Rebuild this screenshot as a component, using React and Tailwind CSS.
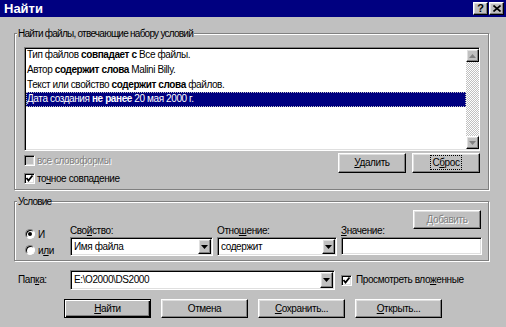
import React from "react";

const raised =
  "border border-t-white border-l-white border-r-black border-b-black shadow-[inset_-1px_-1px_0_#808080,inset_1px_1px_0_#dfdfdf] bg-[#c0c0c0]";
const sunken =
  "border border-t-[#808080] border-l-[#808080] border-r-white border-b-white shadow-[inset_1px_1px_0_#000,inset_-1px_-1px_0_#dfdfdf]";
const txt = "text-[10px] tracking-[-0.4px]";

function Btn({ children, className = "", disabled, def }) {
  const base = def
    ? "border border-black shadow-[inset_1px_1px_0_#fff,inset_-1px_-1px_0_#000,inset_-2px_-2px_0_#808080] bg-[#c0c0c0]"
    : raised;
  return (
    <div
      className={`${base} flex items-center justify-center ${txt} leading-[12px] ${
        disabled ? "text-[#808080] [text-shadow:1px_1px_0_#fff]" : "text-black"
      } ${className}`}
    >
      <span>{children}</span>
    </div>
  );
}

function DownTri({ color = "#000" }) {
  return (
    <svg width="7" height="4" viewBox="0 0 7 4">
      <polygon points="0,0 7,0 3.5,4" fill={color} />
    </svg>
  );
}

function UpTri({ color = "#000" }) {
  return (
    <svg width="7" height="4" viewBox="0 0 7 4">
      <polygon points="3.5,0 7,4 0,4" fill={color} />
    </svg>
  );
}

function Combo({ value, className = "" }) {
  return (
    <div className={`${sunken} bg-white flex items-stretch p-[1px] ${className}`}>
      <div className={`flex-1 flex items-center pl-[2px] ${txt} leading-[12px] text-black whitespace-nowrap overflow-hidden`}>
        <span>{value}</span>
      </div>
      <div className={`${raised} w-[13px] flex items-center justify-center`}>
        <DownTri />
      </div>
    </div>
  );
}

function Check({ checked, disabled }) {
  return (
    <div
      className={`${sunken} w-[11px] h-[11px] ${disabled ? "bg-[#c0c0c0]" : "bg-white"} flex items-center justify-center shrink-0`}
    >
      {checked && (
        <svg width="9" height="9" viewBox="0 0 9 9">
          <polyline points="1.5,4 3.5,6.5 7.5,1.5" fill="none" stroke="#000" strokeWidth="1.8" />
        </svg>
      )}
    </div>
  );
}

function Radio({ checked }) {
  return (
    <div className="w-[10px] h-[10px] rounded-full border border-t-[#808080] border-l-[#808080] border-r-white border-b-white bg-white shadow-[inset_1px_1px_0_#000] flex items-center justify-center shrink-0">
      {checked && <div className="w-[4px] h-[4px] rounded-full bg-black" />}
    </div>
  );
}

function Group({ label, className = "", children }) {
  return (
    <div
      className={`relative border border-[#808080] shadow-[inset_1px_1px_0_#fff,1px_1px_0_#fff] ${className}`}
    >
      <div className="absolute -top-[7px] left-[2px] px-[1px] bg-[#c0c0c0] text-[10px] tracking-[-0.75px] leading-[13px] text-black whitespace-nowrap">
        {label}
      </div>
      {children}
    </div>
  );
}

const rows = [
  <>Тип файлов <b>совпадает с</b> Все файлы.</>,
  <>Автор <b>содержит слова</b> Malini Billy.</>,
  <>Текст или свойство <b>содержит слова</b> файлов.</>,
  <>Дата создания <b>не ранее</b> 20 мая 2000 г.</>,
];

export default function App() {
  return (
    <div className="w-[506px] h-[327px] overflow-hidden bg-[#c0c0c0] [font-family:'Liberation_Sans',Arial,sans-serif] text-black select-none">
      {/* Title bar */}
      <div className="h-[17px] bg-[#000080] flex items-center justify-between pl-[4px] pr-[2px]">
        <span className="text-white font-bold text-[13px] leading-[15px]">Найти</span>
        <div className="flex gap-[1px]">
          <div className={`${raised} w-[15px] h-[13px] flex items-center justify-center text-[11px] font-bold leading-[11px]`}>
            ?
          </div>
          <div className={`${raised} w-[15px] h-[13px] flex items-center justify-center`}>
            <svg width="8" height="7" viewBox="0 0 8 7">
              <path d="M0.5 0.5 L7.5 6.5 M7.5 0.5 L0.5 6.5" stroke="#000" strokeWidth="1.6" />
            </svg>
          </div>
        </div>
      </div>

      <div className="px-[14px] pt-[16px]">
        {/* Group 1 */}
        <Group label="Найти файлы, отвечающие набору условий" className="w-[475px] h-[157px]">
          <div className="pt-[13px] pl-[9px]">
            <div className={`${sunken} bg-white w-[456px] h-[104px] flex`}>
              <div className="flex-1 flex flex-col pl-[1px]">
                {rows.map((r, i) => (
                  <div
                    key={i}
                    className={`h-[14.67px] flex items-center pl-[1px] ${txt} leading-[12px] whitespace-nowrap ${
                      i === 3
                        ? "bg-[#000080] text-white outline outline-1 outline-dotted outline-[#c0c0c0] -outline-offset-1"
                        : "text-black"
                    }`}
                  >
                    <span>{r}</span>
                  </div>
                ))}
              </div>
              <div className="w-[13px] flex flex-col pt-[1px] pb-[1px]">
                <div className={`${raised} h-[13px] flex items-center justify-center`}>
                  <UpTri color="#808080" />
                </div>
                <div className="flex-1 bg-[repeating-conic-gradient(#c0c0c0_0_25%,#fff_0_50%)] bg-[length:2px_2px]" />
                <div className={`${raised} h-[13px] flex items-center justify-center`}>
                  <DownTri color="#808080" />
                </div>
              </div>
            </div>
            <div className="flex justify-between w-[456px]">
              <div className="flex flex-col pt-[4px] gap-[7px]">
                <div className="flex items-center gap-[2px] h-[11px]">
                  <Check disabled />
                  <span className={`${txt} leading-[11px] text-[#808080] [text-shadow:1px_1px_0_#fff]`}>
                    все словоформы
                  </span>
                </div>
                <div className="flex items-center gap-[2px] h-[11px]">
                  <Check checked />
                  <span className={`${txt} leading-[11px]`}>
                    то<u>ч</u>ное совпадение
                  </span>
                </div>
              </div>
              <div className="flex gap-[6px] pt-[2px]">
                <Btn className="w-[68px] h-[20px]">
                  <u>У</u>далить
                </Btn>
                <Btn className="w-[68px] h-[20px]">
                  <span className="outline outline-1 outline-dotted outline-black outline-offset-1">
                    С<u>б</u>рос
                  </span>
                </Btn>
              </div>
            </div>
          </div>
        </Group>

        {/* Group 2 */}
        <Group label="Условие" className="w-[475px] h-[60px] mt-[11px]">
          <div className="flex justify-end pr-[7px] pt-[8px]">
            <Btn disabled className="w-[68px] h-[19px]">
              Добавить
            </Btn>
          </div>
          <div className="flex -mt-[4px]">
            <div className="w-[55px] pl-[10px] pt-[4px] flex flex-col gap-[6px]">
              <div className="flex items-center gap-[3px] h-[10px]">
                <Radio checked />
                <span className={`${txt} leading-[11px]`}>И</span>
              </div>
              <div className="flex items-center gap-[3px] h-[10px]">
                <Radio />
                <span className={`${txt} leading-[11px]`}>
                  и<u>л</u>и
                </span>
              </div>
            </div>
            <div className="w-[143px] flex flex-col">
              <span className={`${txt} leading-[12px]`}>
                Сво<u>й</u>ство:
              </span>
              <Combo value="Имя файла" className="h-[19px]" />
            </div>
            <div className="w-[120px] ml-[4px] flex flex-col">
              <span className={`${txt} leading-[12px]`}>
                Отно<u>ш</u>ение:
              </span>
              <Combo value="содержит" className="h-[19px]" />
            </div>
            <div className="w-[141px] ml-[4px] flex flex-col">
              <span className={`${txt} leading-[12px]`}>
                <u>З</u>начение:
              </span>
              <div className={`${sunken} bg-white h-[18px]`} />
            </div>
          </div>
        </Group>

        {/* Folder row */}
        <div className="mt-[9px] flex items-center h-[20px]">
          <span className={`w-[56px] pl-[4px] ${txt} leading-[12px]`}>
            Пап<u>к</u>а:
          </span>
          <Combo value="E:\O2000\DS2000" className="w-[265px] h-[20px]" />
          <div className="ml-[6px] flex items-center gap-[4px]">
            <Check checked />
            <span className={`${txt} leading-[12px]`}>
              Просмотреть вло<u>ж</u>енные
            </span>
          </div>
        </div>

        {/* Bottom buttons */}
        <div className="mt-[9px] flex gap-[10px] pl-[50px]">
          <Btn def className="w-[87px] h-[19px]">
            <u>Н</u>айти
          </Btn>
          <Btn className="w-[87px] h-[19px]">Отмена</Btn>
          <Btn className="w-[87px] h-[19px]">
            <u>С</u>охранить...
          </Btn>
          <Btn className="w-[87px] h-[19px]">
            <u>О</u>ткрыть...
          </Btn>
        </div>
      </div>
    </div>
  );
}
